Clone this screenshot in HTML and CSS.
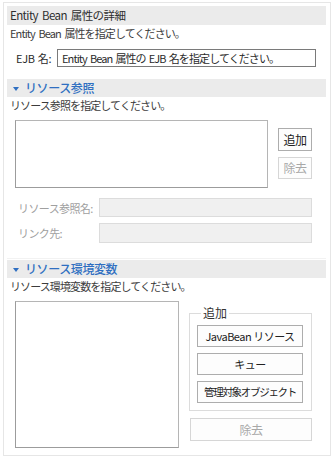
FILE: index.html
```html
<!DOCTYPE html>
<html lang="ja">
<head>
<meta charset="utf-8">
<link rel="stylesheet" href="styles.css">
</head>
<body>
<div class="frame">
  <div class="band">Entity Bean 属性の詳細</div>
  <div class="desc">Entity Bean 属性を指定してください。</div>
  <div class="ejb-row">
    <span class="ejb-label">EJB 名:</span>
    <div class="input">Entity Bean 属性の EJB 名を指定してください。</div>
  </div>

  <div class="band section"><span class="tri"></span>リソース参照</div>
  <div class="desc">リソース参照を指定してください。</div>
  <div class="ref-area">
    <div class="list list-ref"></div>
    <div class="ref-buttons">
      <div class="btn small">追加</div>
      <div class="btn small disabled">除去</div>
    </div>
  </div>
  <div class="field-row first">
    <span class="field-label">リソース参照名:</span>
    <div class="field"></div>
  </div>
  <div class="field-row">
    <span class="field-label">リンク先:</span>
    <div class="field tall"></div>
  </div>
  <div class="sep"></div>

  <div class="band section s3"><span class="tri"></span>リソース環境変数</div>
  <div class="desc">リソース環境変数を指定してください。</div>
  <div class="env-area">
    <div class="list list-env"></div>
    <div class="env-right">
      <fieldset class="group">
        <legend>追加</legend>
        <div class="btn wide">JavaBean リソース</div>
        <div class="btn wide">キュー</div>
        <div class="btn wide tight">管理対象オブジェクト</div>
      </fieldset>
      <div class="btn remove disabled">除去</div>
    </div>
  </div>
</div>
</body>
</html>
```

FILE: styles.css
```css
* { box-sizing: border-box; }
html, body { margin: 0; padding: 0; background: #fff; }
body {
  font-family: "Noto Sans CJK JP", sans-serif;
  font-size: 11px;
  color: #2b2b2b;
  width: 335px;
  height: 459px;
  overflow: hidden;
}
.frame {
  margin: 2px 4px 0 3px;
  height: 454px;
  border: 1px solid #e6e6e6;
  padding: 3px 4px 0 3px;
}
.band {
  height: 19px;
  line-height: 19px;
  background: #ebebeb;
  padding-left: 3px;
  color: #2e2e2e;
  font-size: 11.5px;
  letter-spacing: -0.6px;
  word-spacing: 2px;
}
.section {
  height: 18px;
  line-height: 18px;
  margin-top: 12px;
  color: #2f6fc1;
  padding-left: 6px;
  font-size: 12px;
  font-weight: 500;
  letter-spacing: -0.4px;
  display: flex;
  align-items: center;
}
.tri {
  width: 0; height: 0;
  border-left: 3.5px solid transparent;
  border-right: 3.5px solid transparent;
  border-top: 4px solid #2f6fc1;
  margin-right: 6px;
  margin-top: 1px;
}
.desc {
  height: 16px;
  line-height: 16px;
  padding-left: 3px;
  color: #3c3c3c;
  letter-spacing: -0.9px;
  word-spacing: 2px;
}
.ejb-row {
  display: flex;
  align-items: center;
  margin-top: 8px;
  padding-left: 9px;
}
.ejb-label {
  width: 41px;
  letter-spacing: -0.3px;
  word-spacing: 1px;
}
.input {
  width: 259px;
  height: 18px;
  line-height: 16px;
  border: 1px solid #7a7a7a;
  padding-left: 4px;
  letter-spacing: -0.9px;
  word-spacing: 1.5px;
  white-space: nowrap;
  overflow: hidden;
}
.ref-area {
  display: flex;
  margin-top: 7px;
  padding-left: 8px;
}
.list {
  border: 1px solid #9c9c9c;
  border-right-color: #b5b5b5;
  border-top-color: #b5b5b5;
  background: #fff;
}
.list-ref { width: 253px; height: 68px; }
.ref-buttons {
  display: flex;
  flex-direction: column;
  gap: 6px;
  margin-left: 10px;
  margin-top: 8px;
}
.btn {
  border: 1px solid #adadad;
  background: #fdfdfd;
  text-align: center;
  color: #222;
  white-space: nowrap;
  letter-spacing: -0.5px;
}
.btn.small { width: 34px; height: 23px; line-height: 21px; font-size: 12px; }
.btn.small.disabled { height: 22px; line-height: 20px; }
.btn.disabled { border-color: #d6d6d6; color: #a8a8a8; }
.field-row {
  display: flex;
  align-items: center;
  margin-top: 6px;
  padding-left: 11px;
}
.field-row.first { margin-top: 10px; }
.field-label {
  width: 81px;
  color: #a0a0a0;
  letter-spacing: -0.6px;
}
.field {
  width: 213px;
  height: 19px;
  background: #f0f0f0;
  border: 1px solid #dcdcdc;
}
.field.tall { height: 20px; }
.sep {
  margin-top: 15px;
  height: 1px;
  background: #f2f2f2;
}
.section.s3 { margin-top: 1px; height: 18px; }
.env-area {
  display: flex;
  margin-top: 7px;
  padding-left: 8px;
}
.list-env { width: 164px; height: 147px; }
.env-right {
  margin-left: 10px;
  display: flex;
  flex-direction: column;
}
.group {
  margin: 5px 0 0 0;
  padding: 5px 8px 7px 7px;
  width: 123px;
  border: 1px solid #dcdcdc;
  min-width: 0;
  display: flex;
  flex-direction: column;
  gap: 6px;
}
.group legend {
  padding: 0 2px;
  margin-left: 4px;
  font-size: 12px;
  color: #333;
  line-height: 14px;
}
.btn.wide { width: 106px; height: 22px; line-height: 20px; }
.btn.tight { letter-spacing: -1.3px; font-size: 10.5px; }
.btn.remove {
  margin-top: 7px;
  width: 122px;
  margin-left: 1px;
  height: 23px;
  line-height: 21px;
  font-size: 12px;
}
```
